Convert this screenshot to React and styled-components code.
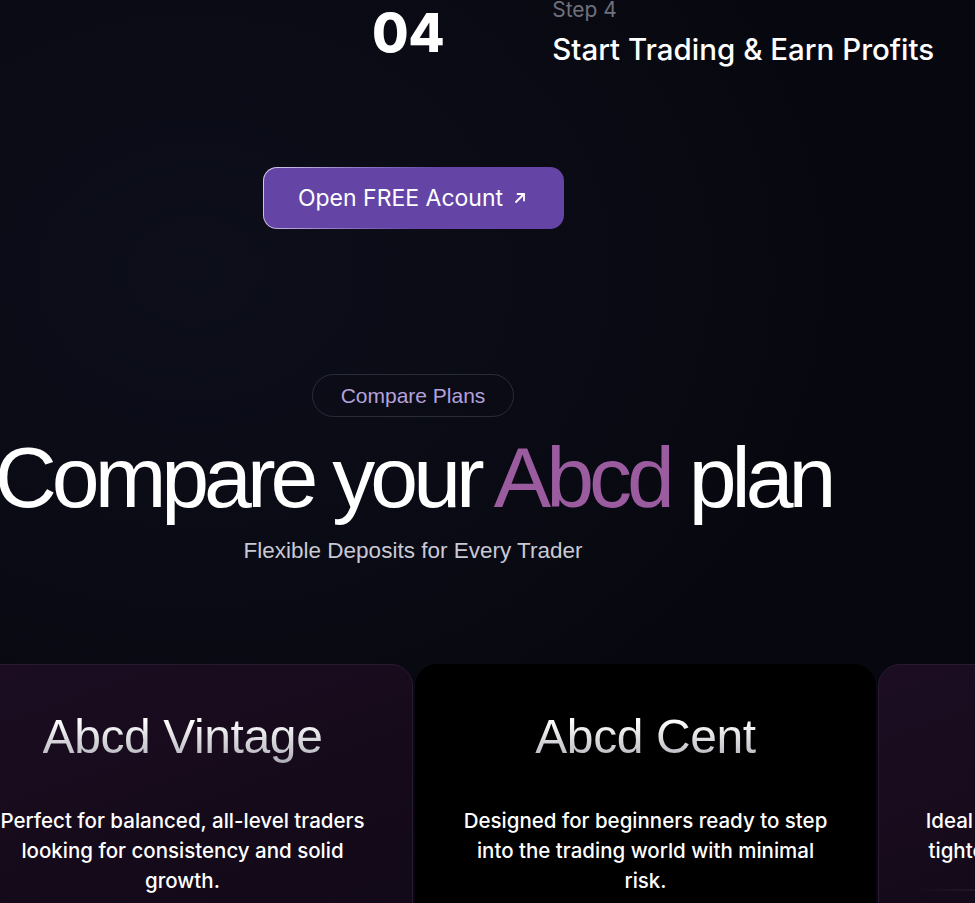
import React from 'react';
import styled, { createGlobalStyle } from 'styled-components';

const GlobalStyle = createGlobalStyle`
    html, body {
        margin: 0;
        padding: 0;
        background: #07080f;
        overflow: hidden;
    }
    body {
        font-family: Inter, "Liberation Sans", sans-serif;
        color: #ffffff;
    }
`;

const Page = styled.div`
    width: 975px;
    height: 903px;
    overflow: hidden;
    background:
        radial-gradient(ellipse at 20% 30%, rgba(20, 22, 40, 0.45), transparent 60%),
        #07080f;
`;

const Column = styled.div`
    width: 826px;
    display: flex;
    flex-direction: column;
    align-items: center;
`;

const StepRow = styled.div`
    align-self: stretch;
    display: flex;
    align-items: flex-start;
    gap: 108px;
    padding-left: 372px;
    margin-top: -5px;
`;

const StepNumber = styled.div`
    font-family: Inter, sans-serif;
    font-weight: 800;
    font-size: 53px;
    line-height: 1;
    margin-top: 12px;
    letter-spacing: -0.5px;
`;

const StepText = styled.div`
    display: flex;
    flex-direction: column;
`;

const StepLabel = styled.span`
    font-size: 21px;
    line-height: 30px;
    color: #6f707c;
`;

const StepTitle = styled.span`
    font-size: 29.5px;
    font-weight: 500;
    line-height: 40px;
    margin-top: 4px;
    white-space: nowrap;
`;

const OpenButton = styled.button`
    margin-top: 98px;
    width: 301px;
    height: 62px;
    border-radius: 14px;
    border: 1.5px solid transparent;
    background:
        linear-gradient(#6445a6, #6445a6) padding-box,
        linear-gradient(110deg, #d8cdee 0%, #8f78c4 30%, #6445a6 55%, #6445a6 100%) border-box;
    color: #ffffff;
    font-family: Inter, sans-serif;
    font-size: 23px;
    display: flex;
    align-items: center;
    justify-content: center;
    gap: 9px;
    cursor: pointer;
`;

const Pill = styled.div`
    margin-top: 145px;
    height: 43px;
    box-sizing: border-box;
    padding: 0 28px;
    border: 1px solid #2b2c3a;
    border-radius: 22px;
    display: flex;
    align-items: center;
    font-family: "Liberation Sans", Arial, sans-serif;
    font-size: 21px;
    color: #b5a2dc;
`;

const Heading = styled.h1`
    margin: 10px 0 0;
    font-family: "Liberation Sans", Arial, sans-serif;
    font-weight: 400;
    font-size: 86px;
    line-height: 100px;
    letter-spacing: -5px;
    white-space: nowrap;
`;

const Accent = styled.span`
    color: #9b5b9f;
`;

const Subtitle = styled.p`
    margin: 10px 0 0;
    font-family: "Liberation Sans", Arial, sans-serif;
    font-size: 22.5px;
    line-height: 28px;
    color: #c9c9d6;
`;

const Track = styled.div`
    margin-top: 99px;
    display: flex;
    gap: 2px;
    transform: translateX(-48px);
`;

const Card = styled.div`
    flex: 0 0 461px;
    height: 300px;
    box-sizing: border-box;
    border-radius: 22px;
    border: 1px solid ${p => (p.$dark ? '#000' : '#2a1a30')};
    background: ${p => p.$dark
        ? '#000000'
        : 'linear-gradient(160deg, #1c0d22 0%, #140a19 60%, #12091a 100%)'};
    padding: 44px 43px 0;
    display: flex;
    flex-direction: column;
    align-items: center;
    position: relative;
`;

const CardTitle = styled.h2`
    margin: 0;
    font-family: "Liberation Sans", Arial, sans-serif;
    font-weight: 400;
    font-size: 48px;
    line-height: 56px;
    letter-spacing: -0.4px;
    white-space: nowrap;
    background: linear-gradient(180deg, #ffffff 20%, #a9a9b2 100%);
    -webkit-background-clip: text;
    background-clip: text;
    color: transparent;
`;

const CardText = styled.p`
    margin: 41px 0 0;
    font-family: Inter, sans-serif;
    font-weight: 500;
    font-size: 20.5px;
    line-height: 30px;
    text-align: center;
    color: #ffffff;
`;

const Divider = styled.div`
    position: absolute;
    left: 38px;
    right: 0;
    top: 224px;
    height: 2px;
    background: linear-gradient(90deg, rgba(60, 45, 75, 0) 0%, #3a2c48 40%, #3a2c48 100%);
`;

const ArrowIcon = () => (
    <svg width="16" height="16" viewBox="0 0 16 16" fill="none" stroke="#fff" strokeWidth="1.8" strokeLinecap="round" strokeLinejoin="round">
        <path d="M4 12L12 4" />
        <path d="M5.5 4H12V10.5" />
    </svg>
);

const plans = [
    { name: 'Abcd Vintage', text: 'Perfect for balanced, all-level traders looking for consistency and solid growth.' },
    { name: 'Abcd Cent', text: 'Designed for beginners ready to step into the trading world with minimal risk.', dark: true },
    { name: 'Abcd Pro', text: 'Ideal for experienced traders seeking tighter spreads and faster execution.', divider: true },
];

const App = () => {
    return (
        <Page>
            <GlobalStyle />
            <Column>
                <StepRow>
                    <StepNumber>04</StepNumber>
                    <StepText>
                        <StepLabel>Step 4</StepLabel>
                        <StepTitle>Start Trading &amp; Earn Profits</StepTitle>
                    </StepText>
                </StepRow>
                <OpenButton>
                    Open FREE Acount <ArrowIcon />
                </OpenButton>
                <Pill>Compare Plans</Pill>
                <Heading>
                    Compare your <Accent>Abcd</Accent> plan
                </Heading>
                <Subtitle>Flexible Deposits for Every Trader</Subtitle>
            </Column>
            <Track>
                {plans.map(({ name, text, dark, divider }) => (
                    <Card key={name} $dark={dark}>
                        <CardTitle>{name}</CardTitle>
                        <CardText>{text}</CardText>
                        {divider && <Divider />}
                    </Card>
                ))}
            </Track>
        </Page>
    );
};

export default App;
